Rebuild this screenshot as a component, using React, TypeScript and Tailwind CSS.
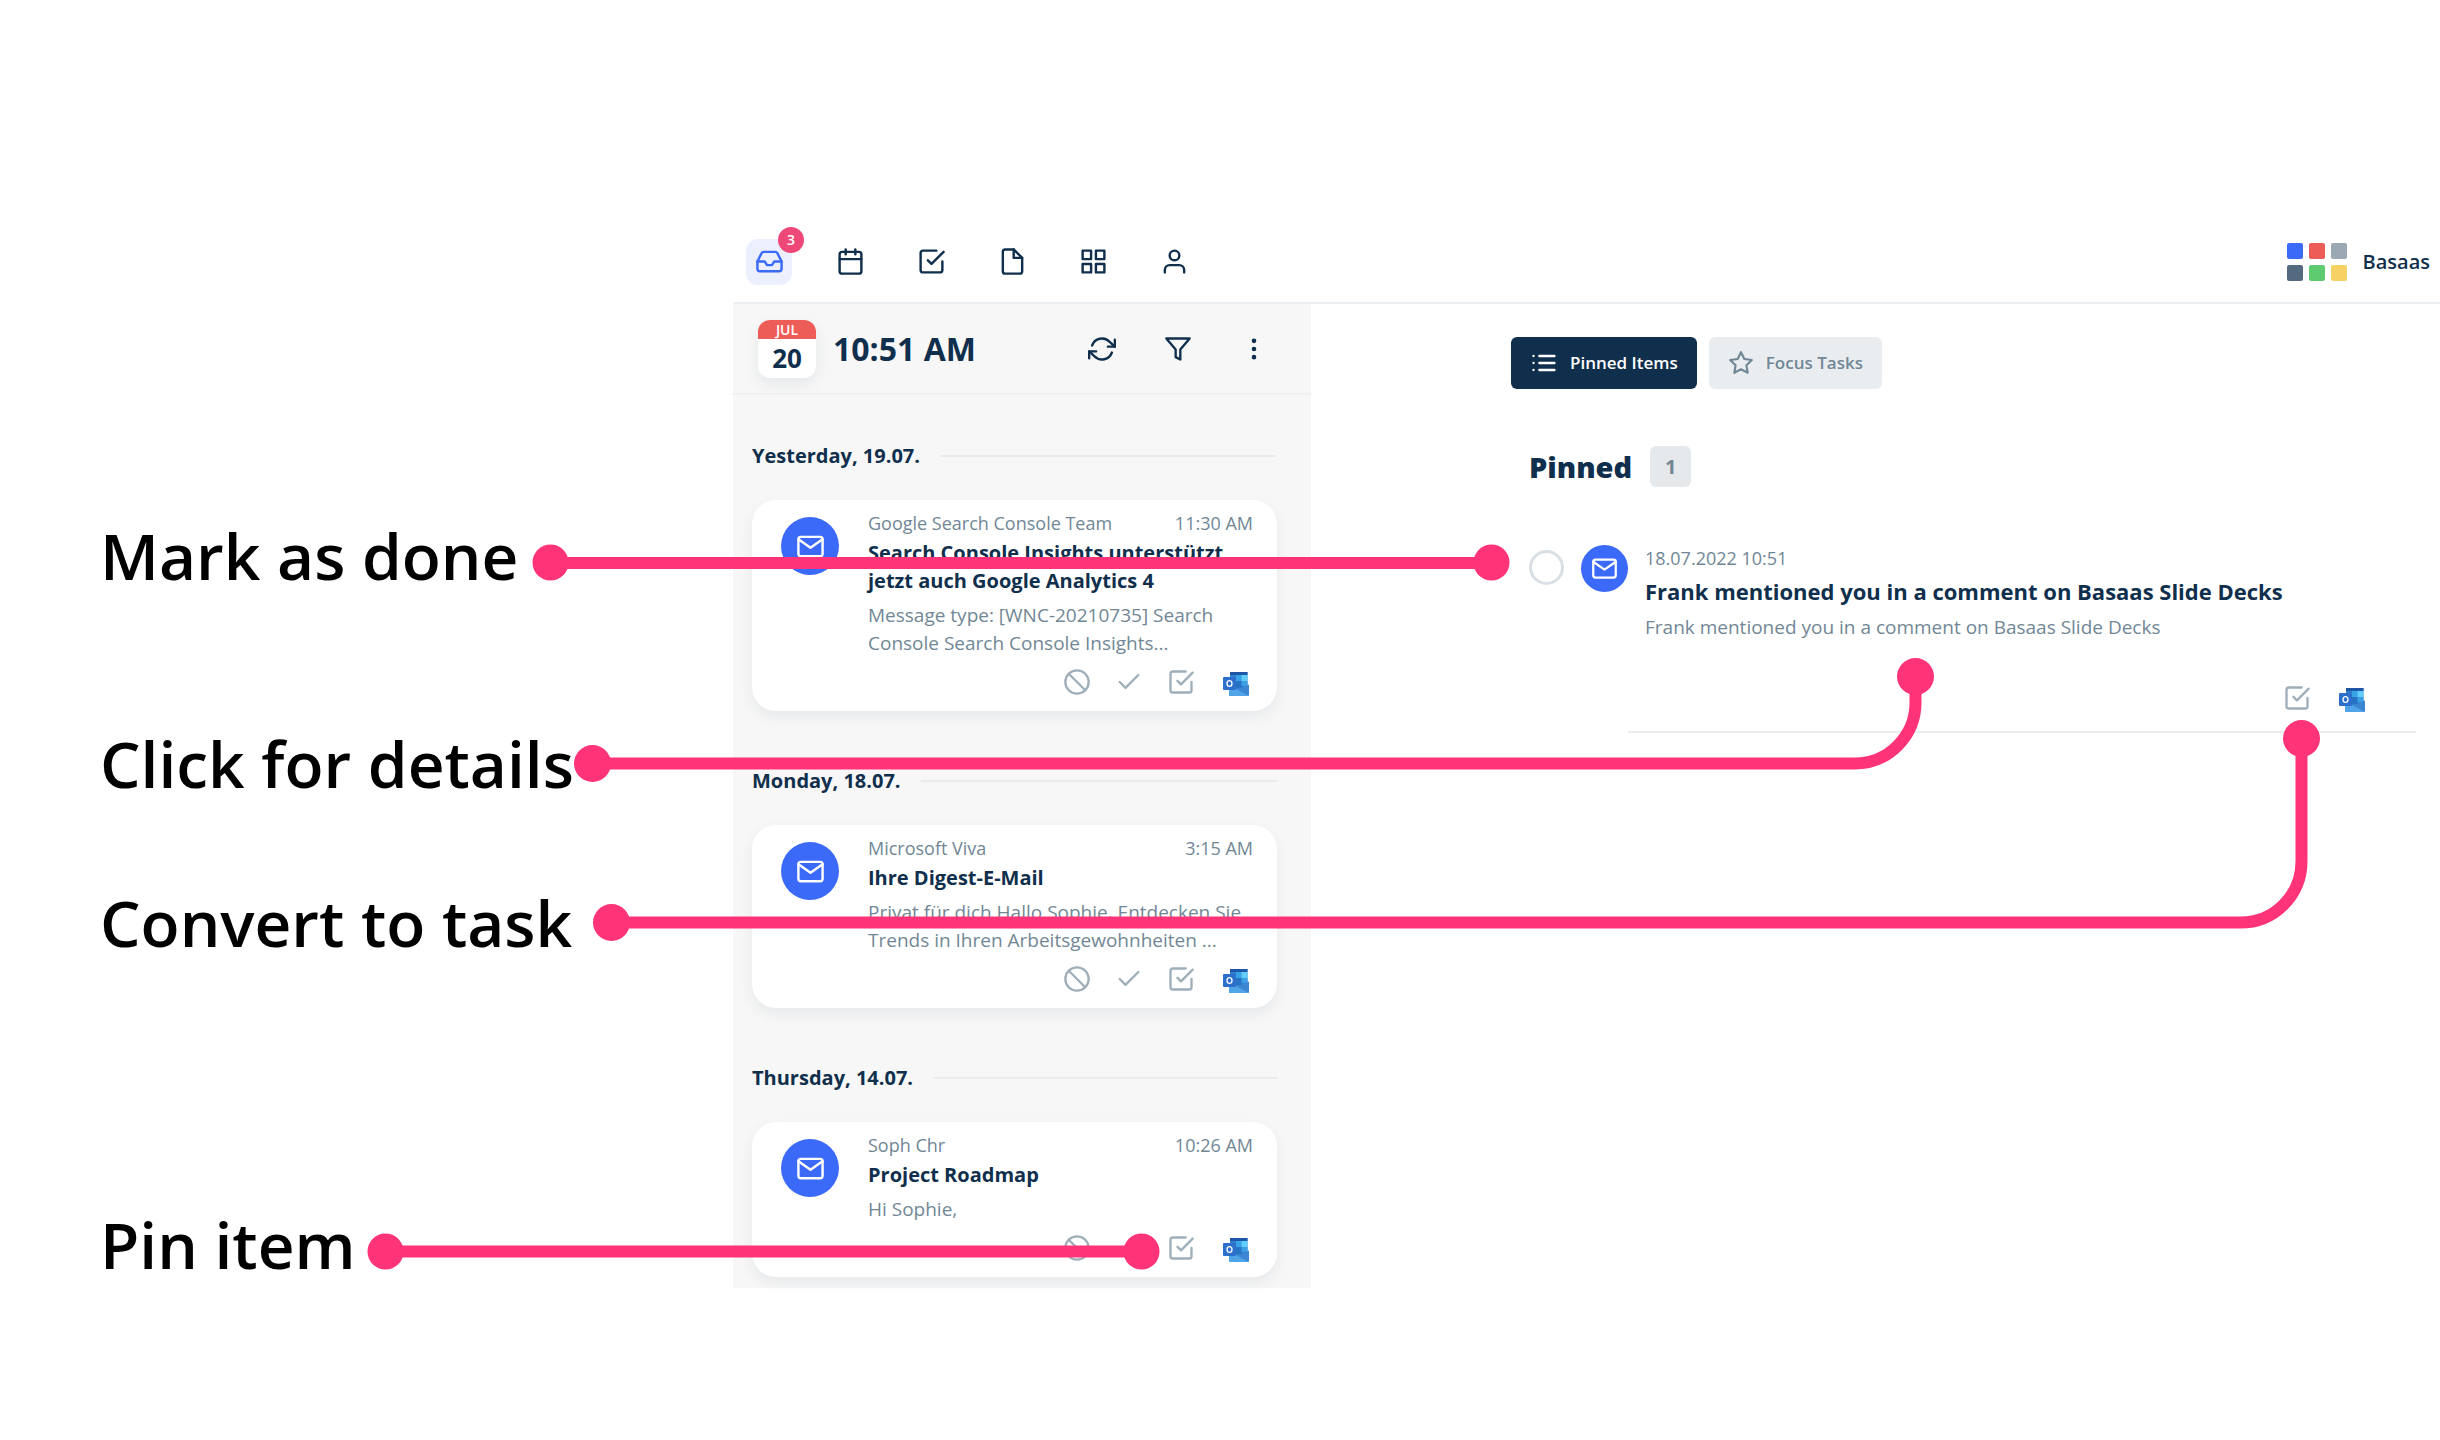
import { FiCalendar, FiCheck, FiCheckSquare, FiFile, FiFilter, FiGrid, FiInbox, FiList, FiMail, FiMoreVertical, FiRefreshCw, FiSlash, FiStar, FiUser } from "react-icons/fi";
import type { IconType } from "react-icons";

type Message = {
  sender: string;
  time: string;
  title: string;
  preview: string;
};

type MessageGroup = {
  day: string;
  messages: Message[];
};

const navItems: { label: string; icon: IconType; count?: number }[] = [
  { label: "Inbox", icon: FiInbox, count: 3 },
  { label: "Calendar", icon: FiCalendar },
  { label: "Tasks", icon: FiCheckSquare },
  { label: "Files", icon: FiFile },
  { label: "Apps", icon: FiGrid },
  { label: "Contacts", icon: FiUser },
];

const groups: MessageGroup[] = [
  {
    day: "Yesterday, 19.07.",
    messages: [
      {
        sender: "Google Search Console Team",
        time: "11:30 AM",
        title: "Search Console Insights unterstützt jetzt auch Google Analytics 4",
        preview: "Message type: [WNC-20210735] Search Console Search Console Insights...",
      },
    ],
  },
  {
    day: "Monday, 18.07.",
    messages: [
      {
        sender: "Microsoft Viva",
        time: "3:15 AM",
        title: "Ihre Digest-E-Mail",
        preview: "Privat für dich Hallo Sophie, Entdecken Sie Trends in Ihren Arbeitsgewohnheiten ...",
      },
    ],
  },
  {
    day: "Thursday, 14.07.",
    messages: [{ sender: "Soph Chr", time: "10:26 AM", title: "Project Roadmap", preview: "Hi Sophie," }],
  },
];

const logoColors = ["bg-[#3b6af8]", "bg-[#ee5c58]", "bg-[#9ba9b4]", "bg-[#546a80]", "bg-[#5fcb71]", "bg-[#f6d265]"];

function OutlookIcon() {
  return (
    <svg width="26" height="24" viewBox="0 0 26 24" aria-hidden="true">
      <path d="M7 0h17.500v24H7z" fill="#2f80d0" />
      <path d="M7 0h17.500v3H7z" fill="#1f57a8" />
      <path d="M13 3h5.500v6H13z" fill="#37a2e6" />
      <path d="M18.500 3h6v6h-6z" fill="#62cdf8" />
      <path d="M13 9h5.500v7H13z" fill="#2673c6" />
      <path d="M18.500 9h6v5h-6z" fill="#3b9fe4" />
      <path d="M6 14l9 3.500 11 6.500H6z" fill="#4fa5e8" />
      <path d="M26 12.500V24L14 17.500z" fill="#3c86d2" />
      <rect y="5" width="13" height="13" rx="1" fill="#2c70cb" />
      <ellipse cx="6.500" cy="11.500" rx="2.500" ry="2.900" fill="none" stroke="#fff" strokeWidth="1.300" />
    </svg>
  );
}

function MessageCard({ message }: { message: Message }) {
  return (
    <article className="flex rounded-3xl bg-white pt-[13px] pr-6 pb-[14px] pl-[29px] shadow-[0_6px_14px_rgba(16,47,76,0.07)]">
      <div className="mt-1 flex size-[58px] shrink-0 items-center justify-center rounded-full bg-[#3b6af8] text-white">
        <FiMail size={29} />
      </div>
      <div className="ml-[29px] min-w-0 flex-1">
        <div className="flex justify-between text-[18px] leading-5 text-[#718796]">
          <span>{message.sender}</span>
          <time>{message.time}</time>
        </div>
        <h3 className="mt-[6px] text-[20px] leading-7 font-bold text-[#102f4c]">{message.title}</h3>
        <p className="mt-[6px] text-[19px] leading-7 text-[#718796]">{message.preview}</p>
        <div className="mt-[11px] mb-px flex items-center justify-end gap-6 text-[#9fafba]">
          <button type="button" aria-label="Dismiss">
            <FiSlash size={28} />
          </button>
          <button type="button" aria-label="Pin item">
            <FiCheck size={28} />
          </button>
          <button type="button" aria-label="Convert to task">
            <FiCheckSquare size={28} />
          </button>
          <a href="#outlook" aria-label="Open in Outlook" className="mx-1 pt-1">
            <OutlookIcon />
          </a>
        </div>
      </div>
    </article>
  );
}

function TopBar() {
  return (
    <header className="flex h-[81px] items-center justify-between border-b-2 border-[#edf0f3] pr-[10px] pb-[2px] pl-[13px]">
      <nav className="flex gap-[35px]">
        {navItems.map(({ label, icon: Icon, count }) => (
          <a
            key={label}
            href={`#${label.toLowerCase()}`}
            aria-label={label}
            className={
              count
                ? "relative flex size-[46px] items-center justify-center rounded-xl bg-[#ebeffe] text-[#3b6af8]"
                : "relative flex size-[46px] items-center justify-center text-[#102f4c]"
            }
          >
            <Icon size={29} />
            {count && (
              <span className="absolute -top-3 -right-3 flex size-[26px] items-center justify-center rounded-full bg-[#ee4878] text-[14px] font-semibold text-white">
                {count}
              </span>
            )}
          </a>
        ))}
      </nav>
      <div className="flex items-center gap-4">
        <div className="grid grid-cols-3 gap-[6px]">
          {logoColors.map((color) => (
            <span key={color} className={`size-4 rounded-[2px] ${color}`} />
          ))}
        </div>
        <span className="text-[20px] font-semibold text-[#102f4c]">Basaas</span>
      </div>
    </header>
  );
}

function InboxPanel() {
  return (
    <aside className="w-[578px] shrink-0 bg-[#f7f7f7]">
      <div className="flex h-[91px] items-center border-b-2 border-[#eef0f2] pr-[43px] pl-[25px]">
        <div className="size-[58px] overflow-hidden rounded-xl bg-white text-center text-[#102f4c] shadow-[0_6px_14px_rgba(16,47,76,0.08)]">
          <div className="bg-[#ee5c58] text-[14px] leading-[19px] font-semibold text-white">JUL</div>
          <div className="text-[26px] leading-[39px] font-bold">20</div>
        </div>
        <div className="ml-[17px] text-[32px] font-bold text-[#102f4c]">10:51 AM</div>
        <div className="ml-auto flex gap-12 text-[#102f4c]">
          <button type="button" aria-label="Refresh">
            <FiRefreshCw size={28} />
          </button>
          <button type="button" aria-label="Filter">
            <FiFilter size={28} />
          </button>
          <button type="button" aria-label="More">
            <FiMoreVertical size={28} />
          </button>
        </div>
      </div>
      <div className="flex flex-col gap-14 pt-[47px] pr-[34px] pb-[11px] pl-[19px]">
        {groups.map((group) => (
          <section key={group.day}>
            <div className="mb-[30px] flex items-center gap-5">
              <h2 className="text-[20px] leading-7 font-bold text-[#102f4c]">{group.day}</h2>
              <div className="h-[2px] flex-1 bg-[#e9ecef]" />
            </div>
            {group.messages.map((message) => (
              <MessageCard key={message.title} message={message} />
            ))}
          </section>
        ))}
      </div>
    </aside>
  );
}

function PinnedPanel() {
  return (
    <main className="min-w-0 flex-1 pt-[33px] pr-6 pl-[200px]">
      <div className="flex gap-3 text-[17px] font-semibold">
        <button type="button" className="flex h-[52px] items-center gap-3 rounded-md bg-[#102f4c] px-[19px] text-white">
          <FiList size={28} />
          Pinned Items
        </button>
        <button type="button" className="flex h-[52px] items-center gap-3 rounded-md bg-[#eaedf0] px-[19px] text-[#718796]">
          <FiStar size={26} />
          Focus Tasks
        </button>
      </div>

      <div className="mt-[57px] ml-[18px] flex items-center gap-[18px]">
        <h1 className="text-[29px] leading-10 font-extrabold text-[#102f4c]">Pinned</h1>
        <span className="flex size-[41px] items-center justify-center rounded-md bg-[#e5e9ec] text-[20px] font-bold text-[#718796]">1</span>
      </div>

      <article className="mt-[58px] ml-[18px] flex">
        <input
          type="checkbox"
          aria-label="Mark as done"
          className="mt-[5px] size-[35px] shrink-0 appearance-none rounded-full border-[3px] border-[#d9dfe4]"
        />
        <div className="ml-[17px] flex size-[47px] shrink-0 items-center justify-center rounded-full bg-[#3b6af8] text-white">
          <FiMail size={27} />
        </div>
        <div className="flex-1 border-b-2 border-[#eaedf0] pb-[19px]">
          <div className="ml-[17px]">
            <time className="block text-[18px] leading-[26px] text-[#718796]">18.07.2022 10:51</time>
            <h2 className="mt-1 text-[22px] leading-8 font-bold text-[#102f4c]">Frank mentioned you in a comment on Basaas Slide Decks</h2>
            <p className="mt-1 text-[19px] leading-8 text-[#718796]">Frank mentioned you in a comment on Basaas Slide Decks</p>
          </div>
          <div className="mt-[41px] flex items-center justify-end gap-7 pr-[51px] text-[#9fafba]">
            <button type="button" aria-label="Convert to task">
              <FiCheckSquare size={28} />
            </button>
            <a href="#outlook" aria-label="Open in Outlook" className="pt-1">
              <OutlookIcon />
            </a>
          </div>
        </div>
      </article>
    </main>
  );
}

// Connectors between the captions and the controls they explain
function Callouts() {
  return (
    <svg className="pointer-events-none absolute top-0 left-0" width="2440" height="1440" viewBox="0 0 2440 1440" aria-hidden="true">
      <g fill="none" stroke="#ff3377" strokeWidth="12">
        <path d="M550 563H1491" />
        <path d="M592 763.500H1854.500a61 61 0 0 0 61-61V677" />
        <path d="M611 922.500H2240.500a61 61 0 0 0 61-61V738" />
        <path d="M385 1251.500H1141" />
      </g>
      <g fill="#ff3377">
        <circle cx="550.500" cy="562.500" r="18" />
        <circle cx="1491.500" cy="562.500" r="18" />
        <circle cx="592.500" cy="763.500" r="18.500" />
        <circle cx="1915.500" cy="676.500" r="18.500" />
        <circle cx="611.500" cy="922.500" r="18.500" />
        <circle cx="2301.500" cy="738.500" r="18.500" />
        <circle cx="385.500" cy="1251.500" r="18" />
        <circle cx="1141.500" cy="1251.500" r="18" />
      </g>
    </svg>
  );
}

export default function App() {
  return (
    <div className="relative flex min-h-screen overflow-x-hidden bg-white font-['Open_Sans',sans-serif]">
      <div className="w-[733px] shrink-0 pt-[512px] pl-[100px] text-[64px] leading-[88px] font-semibold text-black">
        <p>Mark as done</p>
        <p className="mt-[120px]">Click for details</p>
        <p className="mt-[71px]">Convert to task</p>
        <p className="mt-[234px]">Pin item</p>
      </div>
      <div className="min-w-0 flex-1 pt-[223px]">
        <TopBar />
        <div className="flex">
          <InboxPanel />
          <PinnedPanel />
        </div>
      </div>
      <Callouts />
    </div>
  );
}
